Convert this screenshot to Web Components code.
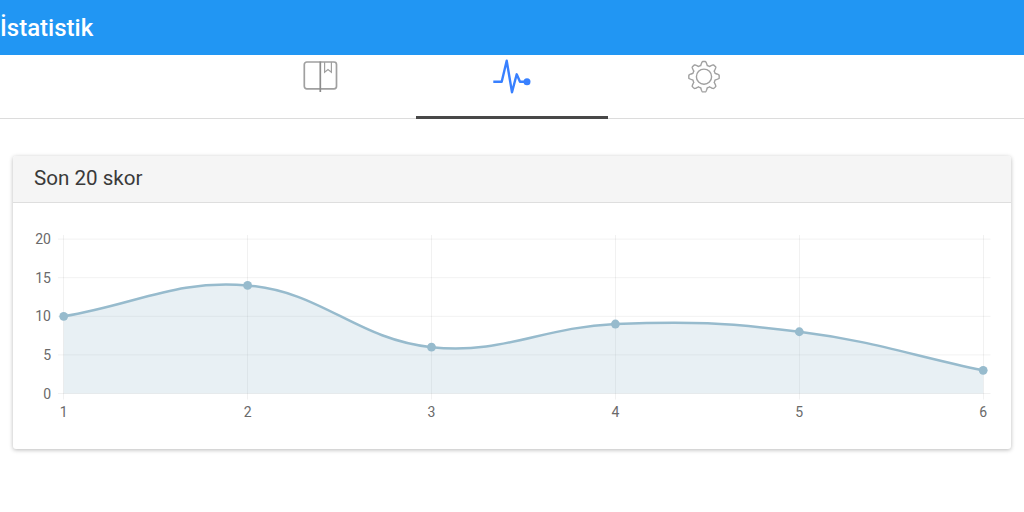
<!DOCTYPE html>
<html lang="tr">
<head>
<meta charset="utf-8">
<title>İstatistik</title>
<style>
  html, body { margin: 0; height: 100%; background: #fff; overflow: hidden; }
  body { font-family: Roboto, "Liberation Sans", sans-serif; display: flex; flex-direction: column; }
</style>
</head>
<body>
<app-bar>İstatistik</app-bar>
<tab-bar>
  <tab-button icon="book"></tab-button>
  <tab-button icon="pulse" active></tab-button>
  <tab-button icon="gear"></tab-button>
</tab-bar>
<stat-card heading="Son 20 skor">
  <score-chart data="10,14,6,9,8,3"></score-chart>
</stat-card>

<script>
class AppBar extends HTMLElement {
  constructor() {
    super()
    this.attachShadow({ mode: "open" }).innerHTML = `
      <style>
        :host { display: flex; align-items: center; height: 55px; background: #2196f3; color: #fff;
                font-size: 24px; font-weight: 500; flex: none; }
      </style>
      <slot></slot>`
  }
}

// gear outline is a wavy circle, easier to compute than to write by hand
function gearPath(cx, cy) {
  let d = ""
  for (let i = 0; i < 240; i++) {
    const a = i / 240 * Math.PI * 2 + Math.PI / 8
    const wave = Math.max(-1, Math.min(1, Math.cos(a * 8) * 1.5))
    const r = 13.4 + wave * 1.8
    d += (i ? "L" : "M") + (cx + r * Math.cos(a)).toFixed(2) + " " + (cy + r * Math.sin(a)).toFixed(2)
  }
  return d + "Z"
}

const ICONS = {
  book: `<svg width="40" height="37" viewBox="0 0 40 37" fill="none" stroke="#a0a0a0" stroke-width="1.7">
      <rect x="4.3" y="7" width="32.2" height="26.8" rx="2.5"/>
      <path d="M20.3 6.5V37" stroke="#8c8c8c"/>
      <path d="M24.6 7V17.2L28 14.6L31.4 17.2V7" stroke-width="1.2"/>
    </svg>`,
  pulse: `<svg width="40" height="39" viewBox="0 0 40 39" fill="none" stroke="#3880ff" stroke-width="2.4" stroke-linejoin="round">
      <path d="M1.3 26.7H9.7L14.7 5.7L20 37.3L24.7 19.3L28 26.7H35.3"/>
      <circle cx="35" cy="26.7" r="3.5" fill="#3880ff" stroke="none"/>
    </svg>`,
  gear: `<svg width="40" height="39" viewBox="0 0 40 39" fill="none" stroke="#a0a0a0" stroke-width="1.4">
      <path d="${gearPath(20, 21.7)}"/>
      <circle cx="20" cy="21.7" r="7.6"/>
    </svg>`
}

class TabBar extends HTMLElement {
  constructor() {
    super()
    this.attachShadow({ mode: "open" }).innerHTML = `
      <style>
        :host { display: flex; justify-content: center; height: 64px; box-sizing: border-box;
                border-bottom: 1px solid #dcdcdc; flex: none; }
      </style>
      <slot></slot>`
  }
}

class TabButton extends HTMLElement {
  constructor() {
    super()
    this.attachShadow({ mode: "open" }).innerHTML = `
      <style>
        :host { display: flex; justify-content: center; width: 192px; height: 64px; box-sizing: border-box;
                line-height: 0; }
        :host([active]) { border-bottom: 3px solid #484848; }
        svg { display: block; }
      </style>
      ${ICONS[this.getAttribute("icon")]}`
  }
}

class StatCard extends HTMLElement {
  constructor() {
    super()
    this.attachShadow({ mode: "open" }).innerHTML = `
      <style>
        :host { display: block; margin: 37px 13px 0; background: #fff; border-radius: 3px;
                box-shadow: 0 1px 4px rgba(0,0,0,.28); flex: none; }
        header { height: 43px; padding: 0 0 3px 21px; display: flex; align-items: center;
                 background: #f5f5f5; border-bottom: 1px solid #dedede; color: #3a3a3a; font-size: 20.6px;
                 border-radius: 3px 3px 0 0; }
      </style>
      <header></header>
      <slot></slot>`
    this.shadowRoot.querySelector("header").textContent = this.getAttribute("heading")
  }
}

class ScoreChart extends HTMLElement {
  constructor() {
    super()
    const data = this.getAttribute("data").split(",").map(Number)
    const xAt = i => 63.7 + i * 183.9
    const yAt = v => 393.5 - v * 7.72
    const pts = data.map((v, i) => [xAt(i), yAt(v)])

    // same spline as chart.js, tension .4
    const t = 0.4
    const ctrl = pts.map((p, i) => {
      const a = pts[i - 1] || p, b = pts[i + 1] || p
      const d1 = Math.hypot(p[0] - a[0], p[1] - a[1]), d2 = Math.hypot(b[0] - p[0], b[1] - p[1])
      const s = d1 + d2
      const f1 = t * d1 / s, f2 = t * d2 / s
      return {
        prev: [p[0] - f1 * (b[0] - a[0]), p[1] - f1 * (b[1] - a[1])],
        next: [p[0] + f2 * (b[0] - a[0]), p[1] + f2 * (b[1] - a[1])]
      }
    })
    let line = `M${pts[0][0]} ${pts[0][1]}`
    for (let i = 1; i < pts.length; i++) {
      line += `C${ctrl[i - 1].next.join(" ")} ${ctrl[i].prev.join(" ")} ${pts[i].join(" ")}`
    }
    const area = line + `L${xAt(5)} 393.5L${xAt(0)} 393.5Z`

    let grid = "", labels = ""
    for (const v of [0, 5, 10, 15, 20]) {
      grid += `<path d="M58 ${yAt(v)}H990.5"/>`
      labels += `<text x="51" y="${yAt(v) + 5}" text-anchor="end">${v}</text>`
    }
    data.forEach((v, i) => {
      const x = Math.floor(xAt(i)) + 0.5
      grid += `<path d="M${x} 235V399.5"/>`
      labels += `<text x="${xAt(i)}" y="417" text-anchor="middle">${i + 1}</text>`
    })
    const dots = pts.map(p => `<circle cx="${p[0]}" cy="${p[1]}" r="4.4"/>`).join("")

    this.attachShadow({ mode: "open" }).innerHTML = `
      <style>
        :host { display: block; height: 246px; }
        svg { display: block; }
        .grid { stroke: rgba(0,0,0,.055); fill: none; }
        text { font-size: 14px; fill: #6a6a6a; }
      </style>
      <svg width="998" height="246" viewBox="13 203 998 246">
        <g class="grid">${grid}</g>
        <path d="${area}" fill="rgba(151,187,205,.22)"/>
        <path d="${line}" fill="none" stroke="#97bbcd" stroke-width="2.5"/>
        <g fill="#97bbcd">${dots}</g>
        <g>${labels}</g>
      </svg>`
  }
}

customElements.define("app-bar", AppBar)
customElements.define("tab-bar", TabBar)
customElements.define("tab-button", TabButton)
customElements.define("stat-card", StatCard)
customElements.define("score-chart", ScoreChart)
</script>
</body>
</html>
